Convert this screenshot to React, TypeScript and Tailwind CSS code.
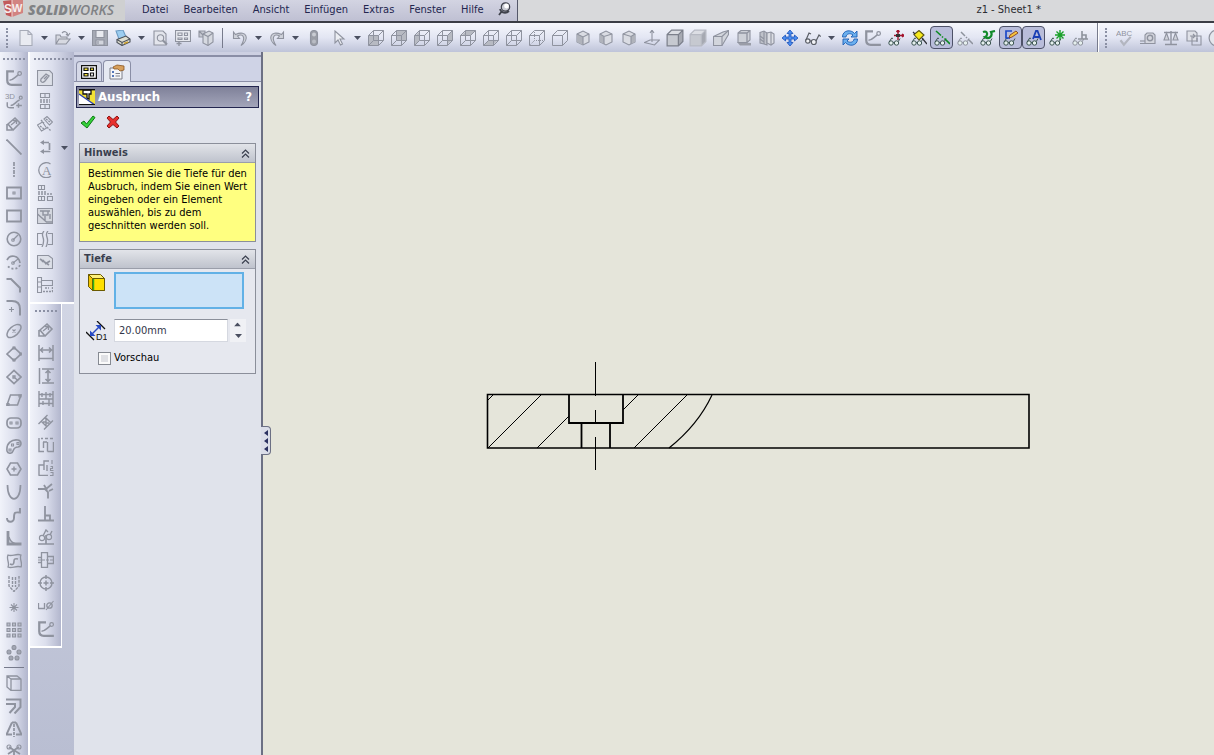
import type { ReactNode } from "react";

const MENU = ["Datei", "Bearbeiten", "Ansicht", "Einfügen", "Extras", "Fenster", "Hilfe"];

type Item = { name: string; icon: ReactNode; active?: boolean; wide?: boolean; drop?: boolean };

type Face = "front" | "back" | "left" | "right" | "top" | "bottom";

const FACES: Record<Face, string> = {
  front: "M1 6h9v9H1z",
  back: "M6 1h9v9H6z",
  left: "M1 6l5-5v9l-5 5z",
  right: "M10 6l5-5v9l-5 5z",
  top: "M1 6l5-5h9l-5 5z",
  bottom: "M1 15l5-5h9l-5 5z",
};

function Svg({ children, size = "m" }: { children: ReactNode; size?: "m" | "l" }) {
  return (
    <svg
      viewBox="0 0 16 16"
      className={size === "l" ? "size-[18px] shrink-0" : "size-4 shrink-0"}
      fill="none"
      stroke="currentColor"
      strokeWidth="1.1"
      aria-hidden="true"
    >
      {children}
    </svg>
  );
}

function Wire({ face }: { face?: Face }) {
  return (
    <Svg>
      {face && <path d={FACES[face]} fill="#b7bac2" stroke="none" />}
      <path d="M.5 5.5h10v10H.5zM5.500.5h10v10h-10zM.5 5.500l5-5M10.500 5.500l5-5M10.500 15.500l5-5M.5 15.500l5-5" strokeWidth="1" />
    </Svg>
  );
}

function Solid({ edges = true }: { edges?: boolean }) {
  return (
    <Svg size="l">
      <path d="M1 5l4-4h10l-4 4z" fill="#dcdee4" stroke="none" />
      <path d="M1 5h10v10H1z" fill="#c6c9d0" stroke="none" />
      <path d="M11 5l4-4v10l-4 4z" fill="#a6a9b2" stroke="none" />
      <path d="M1 15V5l4-4h10v10l-4 4zM1 5h10l4-4M11 5v10" stroke={edges ? "#7c808b" : "#b7bac3"} />
    </Svg>
  );
}

function Iso({ d, left }: { d: string; left: string }) {
  return (
    <Svg>
      <path d="M2 4l6-3 6 3v8l-6 3-6-3z" fill="#dadce3" />
      <path d={left} fill="#b0b3bb" stroke="none" />
      <path d={d} />
    </Svg>
  );
}

/* little pair of spectacles shared by all the show/hide commands */
function Specs({ children, dim }: { children?: ReactNode; dim?: boolean }) {
  return (
    <Svg>
      <g stroke={dim ? "#8d929c" : "#3b5450"} strokeWidth="1">
        <circle cx="3" cy="13" r="2.2" fill="#e6f0ee" />
        <circle cx="8.500" cy="13" r="2.200" fill="#e6f0ee" />
        <path d="M5.200 12.500h1M1.200 12l2.500-4 1.300.5M10.300 11.500L12 8.500" />
      </g>
      {children}
    </Svg>
  );
}

const sketchIcon = (
  <Svg size="l">
    <path d="M8 2H2v8c0 3 1.500 4 4 4h9" strokeWidth="2" />
    <path d="M4 10c3 0 4-2 8-5" strokeWidth="1.300" />
    <circle cx="13" cy="4" r="1.600" />
  </Svg>
);

const dimensionIcon = (
  <Svg>
    <path d="M2 8l7-6 5 5-7 7zM1 8v6h5" strokeWidth="1.600" />
    <path d="M5 9l5-4M7 4.500h3.500V8" strokeWidth="1.300" />
  </Svg>
);

const MAIN_A: Item[] = [
  { name: "Neu", drop: true, icon: <Svg><path d="M2 .5h8l4 4v11H2zM10 .5v4h4" fill="#e9ebf1" stroke="#a7abb7" /></Svg> },
  { name: "Öffnen", drop: true, icon: <Svg><path d="M1 14V5h4l1 2h6v2M1 14l3-5h11l-4 5z" fill="#d7d9e1" /><path d="M7 3c2-2 5-2 6 2M11 4l2 2 2-3" /></Svg> },
  { name: "Speichern", icon: <Svg><path d="M.5.5h15v15H.5z" fill="#a5a9b4" /><path d="M4 .5h8v7H4z" fill="#e8eaf0" /><path d="M4 10h8v5H4z" fill="#d2d5dd" /><path d="M6 11v3" /></Svg> },
  { name: "Drucken", drop: true, icon: (
    <Svg>
      <path d="M1 1l7-1 3 7-7 2z" fill="#9ccdf0" stroke="#6c9cc4" />
      <path d="M2 9.500L11 6l4 3v3l-8 3.500-5-3z" fill="#dedfd2" stroke="#4c5058" />
      <path d="M2 9.500l5 3L15 9M7 12.500v3" stroke="#4c5058" />
      <path d="M9 13.500l4-1.500" stroke="#c99d2d" strokeWidth="1.500" />
    </Svg>
  ) },
  { name: "Seitenansicht", icon: <Svg><path d="M2 1h9l3 3v11H2z" fill="#e3e5ec" /><circle cx="8.500" cy="8" r="3.200" /><path d="M11 10.500l4 4" strokeWidth="2.200" /></Svg> },
  { name: "Zeichnung", icon: <Svg><path d="M.5.5h15v11H.5z" fill="#e6e8ee" /><path d="M3 3h4v2.500H3zM9.500 3h3v2.500h-3zM3 8h4v1.500H3zM9.500 8h3v1.500h-3z" /><path d="M4 11v5M1.500 13.500h5" strokeWidth="1.400" /></Svg> },
  { name: "Baugruppe", icon: <Svg><path d="M1 1h6v6H1zM1 1l6 6" fill="#c6c9d2" /><path d="M5 4l6-3 4 2v9l-5 3.500L5 13z" fill="#d6d9e0" /><path d="M5 4l5 2.500L15 3M10 6.500v9" /></Svg> },
];

const MAIN_B: Item[] = [
  { name: "Rückgängig", drop: true, icon: <Svg><path d="M1.500 2v6.500h6L5.500 6c5-3 9 1 3.500 9.500 9-6 6-16-5.500-11z" fill="#cfd2da" /></Svg> },
  { name: "Wiederholen", drop: true, icon: <Svg><path d="M14.500 2v6.500h-6l2-2.500c-5-3-9 1-3.500 9.500-9-6-6-16 5.500-11z" fill="#cfd2da" /></Svg> },
  { name: "Modellneuaufbau", wide: true, icon: <Svg><rect x="4.500" y=".5" width="7" height="15" rx="3.500" fill="#9b9ea7" /><circle cx="8" cy="4.500" r="2" fill="#c9ccd3" stroke="none" /><circle cx="8" cy="11.500" r="2" fill="#b9bcc4" stroke="none" /></Svg> },
  { name: "Auswählen", drop: true, icon: <Svg><path d="M4 1v12l3-3 2.500 5 2-1L9 9h4z" fill="#eceef3" /></Svg> },
  { name: "Vorderseite", icon: <Wire face="front" /> },
  { name: "Rückseite", icon: <Wire face="back" /> },
  { name: "Links", icon: <Wire face="left" /> },
  { name: "Rechts", icon: <Wire face="right" /> },
  { name: "Oben", icon: <Wire face="top" /> },
  { name: "Unten", icon: <Wire face="bottom" /> },
  { name: "Drahtdarstellung", icon: <Wire /> },
  { name: "Verdeckte Kanten sichtbar", icon: <Svg><path d="M.5 15.500v-10l5-5h10v10l-5 5zM.5 5.500h10l5-5M10.500 5.500v10" strokeWidth="1" /><path d="M5.500 2v8.500H14M5 11l-4 4" strokeDasharray="1 1" strokeWidth="1" /></Svg> },
  { name: "Verdeckte Kanten ausgeblendet", icon: <Svg><path d="M.5 15.500v-10l5-5h10v10l-5 5zM.5 5.500h10l5-5M10.500 5.500v10" strokeWidth="1" /></Svg> },
  { name: "Isometrisch", icon: <Iso left="M2 4l6 3v8l-6-3z" d="M2 4l6 3 6-3M8 7v8" /> },
  { name: "Trimetrisch", icon: <Iso left="M2 4l4 2.500V14l-4-2z" d="M2 4l4 2.500L14 4M6 6.500V14" /> },
  { name: "Dimetrisch", icon: <Iso left="M10 6.500L14 4v8l-4 2z" d="M2 4l8 2.500L14 4M10 6.500V14" /> },
  { name: "Normal auf", icon: <Svg><path d="M8 12V0M6 3l2-3 2 3M.5 12.500L6 10h9.500l-5 5z" /></Svg> },
  { name: "Schattiert mit Kanten", icon: <Solid /> },
  { name: "Schattiert", icon: <Solid edges={false} /> },
  { name: "Perspektive", icon: <Svg><path d="M.5 6.500L10 2l5.500-1.500v4L9 15.500H.5z" fill="#d2d5dc" /><path d="M.5 6.500H9v9M9 6.500l6.500-6" /></Svg> },
  { name: "Schatten", icon: <Svg><path d="M1 12l3 3.500h11V13z" fill="#9a9da7" stroke="none" /><path d="M2 3l3-2.500h9V10l-3 2.500H2z" fill="#ced1d8" /><path d="M2 3h9v9.500M11 3l3-2.500" strokeWidth="1.300" /></Svg> },
  { name: "Schnittansicht", icon: <Svg><path d="M1 2.500L5 1l3 2v12l-3-1-4-1z" fill="#bfc2ca" /><path d="M8 3l4-1 3 2v9l-3 2-4-2z" fill="#dcdee4" /><path d="M5 1v13M12 2v12M1 6l4 3M1 9l4 3" /></Svg> },
  { name: "Verschieben", icon: <Svg><path d="M8 0l3 3.500H9V7h3.500V5L16 8l-3.500 3V9H9v3.500h2L8 16l-3-3.500h2V9H3.500v2L0 8l3.500-3v2H7V3.500H5z" fill="#4d8ff0" stroke="#1c50b8" strokeWidth=".8" /></Svg> },
  { name: "Ausblenden/Einblenden", drop: true, icon: <Svg><g stroke="#5a5e66" strokeWidth="1.200"><circle cx="2.800" cy="11" r="2.200" fill="#f2f3f6" /><circle cx="8.800" cy="12" r="2.500" fill="#f2f3f6" /><path d="M5 11h1.500M1 10l3-7 2 1M11 11l3-6 1.700 1.500" /></g></Svg> },
  { name: "Bildneuaufbau", icon: <Svg><path d="M.5 7C.5 0 9-1 12.500 3.500L15 1v6H9l2-2C8 2.500 4 4 4 7zM15.500 9c0 7-8.500 8-12 3.500L1 15V9h6l-2 2c3 2.500 7 1 7-2z" fill="#6cb0ee" stroke="#1d5fb4" strokeWidth=".9" /></Svg> },
  { name: "Skizze schließen", icon: sketchIcon },
  { name: "Ursprünge", icon: <Specs><path d="M10 0v10M6 5.500h10M8.500 2L10 0l1.500 2M14 4l2 1.500L14 7" stroke="#a3142d" strokeWidth="1.400" /><path d="M8 4h4v3H8z" fill="#333" stroke="none" /></Specs> },
  { name: "Ebenen", icon: <Specs><path d="M3 4.500L8 .5l5 4.500-5 5z" fill="#f6e91c" stroke="#5b5410" /><path d="M2 2l2 2M11 8l5 6" stroke="#33343a" strokeWidth="1.300" /></Specs> },
  { name: "Achsen", active: true, icon: <Specs><path d="M2 1l5 4.500M8 6.500l1 1M10.500 8.500L16 14" stroke="#0c8a20" strokeWidth="1.600" /></Specs> },
  { name: "Temporäre Achsen", icon: <Specs dim><path d="M4 2l4 4M9 7l1 1M11 9l5 5" stroke="#8d929c" strokeWidth="1.500" /></Specs> },
  { name: "Kurven", icon: <Specs><path d="M3 2c5-2 5 4 2 5 4 3 8-1 6-5l4-1" stroke="#128a2a" strokeWidth="2.200" /></Specs> },
  { name: "Skizzen", active: true, icon: <Specs><path d="M9 1H3v7h4" stroke="#1c48c8" strokeWidth="1.700" /><path d="M6 8l1-3 6-4 2 2-6 4z" fill="#f7c33b" stroke="#7a3413" strokeWidth=".8" /></Specs> },
  { name: "Beschriftungen", active: true, icon: <Specs><path d="M7 9l3-8h1.500l3.500 9M8.500 7H13" stroke="#1a3fb4" strokeWidth="1.800" /></Specs> },
  { name: "Punkte", icon: <Specs><path d="M11 0v10M6 5h10M7.500 1.500l7 7M14.500 1.500l-7 7" stroke="#1aa02a" strokeWidth="1.400" /></Specs> },
  { name: "Verknüpfungen", icon: <Specs dim><path d="M10 1v8M6 9h10M10 5h4v4" stroke="#8d929c" strokeWidth="1.600" /></Specs> },
];

const MAIN_C: Item[] = [
  { name: "Rechtschreibung", icon: (
    <Svg size="l">
      <text x="0" y="6" fontSize="7" fontFamily="Liberation Sans" fill="currentColor" stroke="none">ABC</text>
      <path d="M4 10l3 4 6-7" strokeWidth="2" stroke="#b3b6c0" />
    </Svg>
  ) },
  { name: "Messen", icon: <Svg><path d="M5 13.500V5l2-2h6l2 2v8.500H0" fill="#d4d6de" /><circle cx="10" cy="8" r="2.700" strokeWidth="1.400" /><path d="M0 11h5" /></Svg> },
  { name: "Masseneigenschaften", icon: <Svg><path d="M8 1v13M1 2.500h14M2 14.500h12" strokeWidth="1.400" /><path d="M3.500 3L1 10h5zM12.500 3L10 10h5z" fill="#d0d3db" /></Svg> },
  { name: "Prüfen", icon: <Svg><path d="M1 1h8l2 2v8H1z" fill="#dfe1e8" /><path d="M6 6h9v9H6zM4 6h5M7 4l2 2-2 2M11 12V8" /></Svg> },
  { name: "Uhr", icon: <Svg size="l"><circle cx="8" cy="8" r="7" fill="#e4e6ec" /><path d="M8 4v4h4" /></Svg> },
];

const SKETCH: Item[] = [
  { name: "Skizze", icon: sketchIcon },
  { name: "3D-Skizze", icon: (
    <Svg size="l">
      <text x="0" y="6" fontSize="7" fontFamily="Liberation Sans" fill="currentColor" stroke="none">3D</text>
      <path d="M2 9v3c0 2 1 2 3 2h3M5 12c3 0 4-3 8-5M12 10v4M10 12h5" strokeWidth="1.300" />
      <circle cx="14" cy="5" r="1.300" />
    </Svg>
  ) },
  { name: "Intelligente Bemaßung", icon: dimensionIcon },
  { name: "Linie", icon: <Svg><path d="M.5.5l15 15" strokeWidth="1.800" /></Svg> },
  { name: "Mittellinie", icon: <Svg><path d="M8 0v16" strokeWidth="1.700" strokeDasharray="4 1 2 1" /></Svg> },
  { name: "Rechteck Mittelpunkt", icon: <Svg><path d="M1 2.500h14v11H1z" strokeWidth="1.800" /><path d="M7 7h2v2H7z" /></Svg> },
  { name: "Rechteck", icon: <Svg><path d="M1 2.500h14v11H1z" strokeWidth="1.800" /></Svg> },
  { name: "Kreis", icon: <Svg><circle cx="8" cy="8" r="6.800" strokeWidth="1.600" /><path d="M7 9l5-5" strokeWidth="1.300" /><circle cx="7" cy="9" r="1.300" /></Svg> },
  { name: "Kreisbogen", icon: <Svg><path d="M1 6c3-6 12-5 13 3" strokeWidth="1.700" /><path d="M14 11c-2 5-10 5-13 0" strokeDasharray="2 2" strokeWidth="1.800" /><path d="M7 9l5-4" /><circle cx="7" cy="9" r="1.300" /></Svg> },
  { name: "Fase", icon: <Svg><path d="M.5 2H5l9 9v4.500" strokeWidth="2" /></Svg> },
  { name: "Verrundung", icon: <Svg><path d="M.5 1H6c6 0 8 3 8 8v6.500" strokeWidth="2" /><path d="M5.500 7v5M3 9.500h5" /></Svg> },
  { name: "Ellipse", icon: <Svg><ellipse cx="8" cy="8" rx="8.500" ry="4.500" transform="rotate(-42 8 8)" strokeWidth="1.500" /><path d="M6.500 6.500l3 3M9.500 6.500l-3 3" /></Svg> },
  { name: "Parallelogramm Ecke", icon: <Svg><path d="M1 8l7-6.500L15 8l-7 6.500z" strokeWidth="1.700" /><path d="M7 1h2v2H7zM14 7h2v2h-2zM7 13h2v2H7z" /></Svg> },
  { name: "Raute", icon: <Svg><path d="M1 8l7-6.500L15 8l-7 6.500z" strokeWidth="1.700" /><path d="M7 7h2v2H7zM9 9l3 2.500" strokeWidth="1.300" /></Svg> },
  { name: "Parallelogramm", icon: <Svg><path d="M4.500 3H15l-3.500 10H1z" strokeWidth="1.500" /><path d="M1 11.500h2v2H1zM13 3h2v2h-2z" /></Svg> },
  { name: "Langloch", icon: <Svg><rect x="1" y="3" width="14" height="10" rx="4" strokeWidth="1.700" /><path d="M4 7h2v2H4zM10 7h2v2h-2z" /></Svg> },
  { name: "Bogenlangloch", icon: <Svg><path d="M1 13C0 5 6 1 12 2c4 1 4 6 0 7-3 0-4 1-5 4-1 3-5 3-6 0z" strokeWidth="1.600" /><path d="M3 11h2v2H3zM5.500 6h2v2h-2zM11 4.500h2v2h-2z" /></Svg> },
  { name: "Polygon", icon: <Svg><path d="M4.500 2h7L15 8l-3.500 6h-7L1 8z" strokeWidth="1.600" /><path d="M8 5.500v5M5.500 8h5" strokeWidth="1.400" /></Svg> },
  { name: "Parabel", icon: <Svg><path d="M1.500 1c0 18.500 13 18.500 13 0" strokeWidth="1.700" /></Svg> },
  { name: "Spline", icon: <Svg><path d="M1 11c0 5 7 5 7 0 0-6 1-6 6-5.500V1" strokeWidth="1.900" /></Svg> },
  { name: "Ecke", icon: <Svg><path d="M2 1v13h13.500" strokeWidth="2.800" /><path d="M3 7c1 4 3 6 7 7" strokeWidth="1.400" /></Svg> },
  { name: "Spline auf Fläche", icon: <Svg><path d="M2 2c4 2 8-2 13 0-2 4 2 8 0 12-5-2-9 2-13 0 2-4-2-8 0-12z" strokeWidth="1.300" /><path d="M4 11c4 2 4-2 4-3s0-3 4-2" strokeWidth="1.600" /></Svg> },
  { name: "Bohrung", icon: <Svg><path d="M3 0v10l5 5.500 5-5.500V0M6.500 1v10M9.500 1v10" strokeWidth="1.400" strokeDasharray="3 1" /></Svg> },
  { name: "Punkt", icon: <Svg><path d="M8 4v9M3.500 8.500h9M5 5.500l6 6M11 5.500l-6 6" /></Svg> },
  { name: "Lineares Muster", icon: <Svg><path d="M1 1h3v3H1zM6.500 1h3v3h-3zM12 1h3v3h-3zM1 6.500h3v3H1zM6.500 6.500h3v3h-3zM12 6.500h3v3h-3zM1 12h3v3H1zM6.500 12h3v3h-3zM12 12h3v3h-3z" fill="#b9bdc9" /></Svg> },
  { name: "Kreismuster", icon: <Svg><g fill="#a3a7b4"><circle cx="8" cy="2.500" r="2" /><circle cx="3" cy="7" r="2" /><circle cx="13" cy="7" r="2" /><circle cx="5" cy="13" r="2" /><circle cx="11" cy="13" r="2" /></g></Svg> },
];

const SKETCH_TOOLS: Item[] = [
  { name: "Elemente übernehmen", icon: <Svg><path d="M1 1h10l4 3v11.500H5L1 12zM1 1l4 3v11.500M5 4h10" strokeWidth="1.300" /></Svg> },
  { name: "Offset", icon: <Svg><path d="M0 1.500h14.500V9l-6 6.500M0 6h9v3l-5.500 6" strokeWidth="2" /></Svg> },
  { name: "Spiegeln", icon: <Svg><path d="M6 1.500L.5 13.500H6M10 1.500l5.500 12H10M6 1.500h4" strokeWidth="1.900" /><path d="M8 3v13" strokeDasharray="3 1" strokeWidth="1.700" /></Svg> },
  { name: "Trimmen", icon: <Svg><path d="M3 3l11 7M13 3L2 10M8 6v9" strokeWidth="1.800" /><circle cx="3" cy="3" r="2" /><circle cx="13" cy="3" r="2" /></Svg> },
];

const VIEWS: Item[] = [
  { name: "Modellansicht", icon: <Svg><path d="M.5.5h12l3 3v12H.5z" fill="#dcdfe7" /><path d="M4 9l5-5 3 2-4 5c-3 3-5 0-4-2zM7 9l3-3" strokeWidth="1.300" /></Svg> },
  { name: "Projizierte Ansicht", icon: <Svg><path d="M3.500.5h9v4h-9zM3.500 11.500h9v4h-9zM8 .5v4M8 11.500v4" /><path d="M3 7h10M3 9h10" strokeDasharray="2 1" strokeWidth="1.300" /></Svg> },
  { name: "Hilfsansicht", icon: <Svg><path d="M.5 9l5-3 4 6-5 3zM7 3l3-2.500L15.500 6l-3 3z" /><path d="M3 10l4 3M9 3l4 3M10 11l4 4M4 4l3 3" strokeDasharray="2 1" strokeWidth="1.400" /></Svg> },
  { name: "Schnittlinie", icon: <Svg><path d="M5 3.500h7.500v9H5" strokeWidth="1.700" strokeDasharray="7 1" /><path d="M7 1L3 3.500 7 6zM7 10l-4 2.500L7 15z" fill="currentColor" stroke="none" /></Svg> },
  { name: "Detailansicht", icon: (
    <Svg>
      <path d="M14 14a7.500 7.500 0 1 1-.5-12" strokeWidth="1.300" />
      <text x="5" y="13" fontSize="13" fontFamily="Liberation Serif" fill="currentColor" stroke="none">A</text>
    </Svg>
  ) },
  { name: "Standard 3 Ansichten", icon: <Svg><path d="M1.500.5h6v4h-6zM1.500 11.500h6v4h-6zM10.500 11.500h5v4h-5zM4.500.5v4M4.500 11.500v4" /><path d="M1 7h9M1 9h14" strokeDasharray="2 1" strokeWidth="1.400" /></Svg> },
  { name: "Ausbruch", icon: <Svg><path d="M.5.5h15v15H.5z" fill="#d5d8e0" /><path d="M3 3h10M6 3v4h5V3M.5 6l9 8h6M13 6v5M8 8v4" strokeWidth="1.400" /></Svg> },
  { name: "Bruchkante", icon: <Svg><path d="M5 2.500H.5v11H5M11 2.500h4.500v11H11" /><path d="M7 0c-5 5 3 6-2 16M11 0C6 5 14 6 9 16" strokeWidth="1.300" /></Svg> },
  { name: "Zuschneiden", icon: <Svg><path d="M.5 1.500h11l4 3v10H.5z" fill="#dcdfe7" /><path d="M3 5l9 6M8 10l5-3M5 8l2-2" strokeWidth="1.600" /></Svg> },
  { name: "Alternative Position", icon: <Svg><path d="M.5.5h4v15h-4zM4.500 3.500h11v5h-11zM.5 5h4M.5 10h4" /><path d="M6 14.500h9.500V9M8 11h4" strokeDasharray="2 1" strokeWidth="1.400" /></Svg> },
];

const DIMENSIONS: Item[] = [
  { name: "Bemaßung", icon: dimensionIcon },
  { name: "Horizontal", icon: <Svg><path d="M1 0v16M15 0v16M1 13.500h14M2 5h12M5 2.500L2.500 5 5 7.500M11 2.500L13.500 5 11 7.500" strokeWidth="1.500" /></Svg> },
  { name: "Vertikal", icon: <Svg><path d="M1.500 0v16M4 1h12M4 15h12M10 2v12M7.500 5L10 2.500 12.500 5M7.500 11l2.500 2.500 2.500-2.500" strokeWidth="1.500" /></Svg> },
  { name: "Basislinie", icon: <Svg><path d="M1 0v16M15 0v16M1 3.500h14M1 8h14M8 1v7M1 12.500h14M11 8v7M4 2v4M12 2v4M5 10v4" strokeWidth="1.400" /></Svg> },
  { name: "Ausgerichtet", icon: <Svg><path d="M.5 10l9-9M6 15.500l9-9M3 7l6 6M7 3l6 6M5 8h3V5M8 12V9h3" strokeWidth="1.400" /></Svg> },
  { name: "Koordinaten horizontal", icon: <Svg><path d="M1 1v13.500h5M5.500 5v6M9.500 5v9.500M9.500 14.500h6V5M3 1.500h2M7 1.500h3M12 1.500h3M5 5h4" strokeWidth="1.400" /></Svg> },
  { name: "Koordinaten vertikal", icon: <Svg><path d="M.5 15.500H10M1 15.500V5h5M6 10V1h5M9 5v6" strokeWidth="1.400" /><path d="M14 0v4M12.500 6.500h2v2h-2v2h3M12.500 12.500h2.500v3h-3" /></Svg> },
  { name: "Fasenbemaßung", icon: <Svg><path d="M0 6h7l3 3v6.500M8 6l6-5M11 8l4-2M6 2l3 5" strokeWidth="1.800" /></Svg> },
  { name: "Beziehung", icon: <Svg><path d="M0 14.500h16M7 0v14M7 9.500h5v5" strokeWidth="1.800" /></Svg> },
  { name: "Beziehungen anzeigen", icon: <Svg><path d="M0 15h16M8 6v9" strokeWidth="1.700" /><circle cx="4" cy="9" r="2.600" /><circle cx="11" cy="8" r="2.600" /><path d="M5 7l3-6 2 2M12 6l2-4" strokeWidth="1.400" /></Svg> },
  { name: "Symmetrie", icon: <Svg><path d="M9.500 4.500h6v7h-6M3.500.5h6v15h-6zM0 5.500h3.500M0 10.500h3.500" strokeWidth="1.300" /><path d="M0 8h16" strokeDasharray="3 1" /></Svg> },
  { name: "Mittelkreuz", icon: <Svg><circle cx="8" cy="8" r="6" strokeWidth="1.400" /><path d="M8 0v4M8 12v4M0 8h4M12 8h4M5.500 8h5M8 5.500v5" strokeWidth="1.500" /></Svg> },
  { name: "Bohrungsbeschreibung", icon: <Svg><path d="M.5 5v5.500h6V5" strokeWidth="1.300" /><circle cx="11.500" cy="7.500" r="2.700" strokeWidth="1.300" /><path d="M8 12l7.500-9" /></Svg> },
  { name: "Skizze bearbeiten", icon: sketchIcon },
];

function Caret() {
  return (
    <svg viewBox="0 0 7 4" className="h-1 w-[7px] fill-[#4a4f60]" aria-hidden="true">
      <path d="M0 0h7L3.500 4z" />
    </svg>
  );
}

function Buttons({ items }: { items: Item[] }) {
  return (
    <>
      {items.map((it) => (
        <div key={it.name} className={it.wide ? "flex w-[25px] shrink-0" : "flex shrink-0"}>
          <button
            type="button"
            aria-label={it.name}
            className={
              it.active
                ? "flex size-[23px] items-center justify-center rounded-sm border border-[#4e5268] bg-[#b9bdda] text-[#8f939f]"
                : "flex size-[23px] items-center justify-center text-[#8f939f]"
            }
          >
            {it.icon}
          </button>
          {it.drop && (
            <button type="button" aria-label={`${it.name} Optionen`} className="flex w-3.5 items-center justify-center">
              <Caret />
            </button>
          )}
        </div>
      ))}
    </>
  );
}

function GripH() {
  return (
    <div className="flex h-3.5 shrink-0 items-center justify-center">
      <div className="w-[22px] border-t-2 border-dotted border-[#8b90a4]" />
    </div>
  );
}

function Group({ title, children }: { title: string; children: ReactNode }) {
  return (
    <section className="mx-[5px] border border-[#8b8f9a] bg-[#e6e8ef]">
      <h2 className="flex h-[19px] items-center justify-between border-b border-[#9a9eaa] bg-linear-to-b from-[#e2e4e9] to-[#bfc3cd] pr-[5px] pl-1 text-[11px] font-bold text-[#3a3f4e]">
        {title}
        <button type="button" aria-label={`${title} einklappen`} className="flex size-[9px]">
          <svg viewBox="0 0 9 9" className="size-[9px]" fill="none" stroke="#3a3f4e" strokeWidth="1.2">
            <path d="M1 4.500L4.500 1 8 4.500M1 8.500L4.500 5 8 8.500" />
          </svg>
        </button>
      </h2>
      {children}
    </section>
  );
}

function MenuBar() {
  return (
    <header className="flex h-[23px] shrink-0 border-b-2 border-[#3b3d45] bg-[#d8d9db]">
      <div className="flex w-[125px] shrink-0 items-start overflow-hidden bg-[#cfd0d1] pl-[3px]">
        <svg viewBox="0 0 21 18" className="mr-1 h-[18px] w-[21px] shrink-0" aria-hidden="true">
          <path d="M0 1l9-1v17l-6-2z" fill="#c25a5c" />
          <path d="M9 0l11-1v14L9 17z" fill="#d28482" />
          <path d="M9 0v17" stroke="#f0d8d6" />
          <text x="1" y="13" fontSize="12" fontWeight="bold" fontFamily="Liberation Sans" fill="#f6eeee">S</text>
          <text x="9" y="12" fontSize="11" fontWeight="bold" fontFamily="Liberation Sans" fill="#f6eeee">W</text>
        </svg>
        <span className="font-['Open_Sans',sans-serif] text-[14px] leading-5 text-[#808285] italic">
          <b className="font-extrabold">SOLID</b>
          <span className="font-semibold">WORKS</span>
        </span>
      </div>
      <nav className="flex shrink-0 items-start gap-[15px] border-r border-[#55586a] bg-linear-to-b from-[#d3d4e2] to-[#bfc0d3] pr-1.5 pl-[17px] text-[11px] leading-5 text-[#23264f]">
        {MENU.map((m) => (
          <button key={m} type="button">{m}</button>
        ))}
        <button type="button" aria-label="Menü anheften" className="mt-0.5">
          <svg viewBox="0 0 13 14" className="h-3.5 w-[13px]" fill="none" stroke="#3f424c" strokeWidth="1.2">
            <path d="M4 9l-3 4M2 7c1 4 6 5 9 2" strokeWidth="1.800" />
            <circle cx="7.500" cy="5" r="4.200" fill="#c9cad3" />
            <circle cx="8.500" cy="4" r="2.400" fill="#fff" stroke="none" />
          </svg>
        </button>
      </nav>
      <h1 className="flex-1 pl-[458px] text-[11px] leading-5 whitespace-nowrap text-[#2b2c30]">z1 - Sheet1 *</h1>
    </header>
  );
}

function MainToolbar() {
  return (
    <div className="flex h-[29px] shrink-0 items-center overflow-hidden bg-linear-to-b from-[#f6f7fc] via-[#e3e6f3] to-[#bfc4d9]">
      <div className="flex w-3.5 shrink-0 justify-center">
        <div className="h-5 border-l-2 border-dotted border-[#8b90a4]" />
      </div>
      <Buttons items={MAIN_A} />
      <div className="mx-[5px] h-5 w-px shrink-0 bg-[#777b8c]" />
      <Buttons items={MAIN_B} />
      <div className="ml-1.5 h-full w-0.5 shrink-0 border-r border-l border-r-white border-l-[#777b8c]" />
      <div className="mx-1.5 h-5 shrink-0 border-l-2 border-dotted border-[#8b90a4]" />
      <Buttons items={MAIN_C} />
    </div>
  );
}

function SideBars() {
  return (
    <div className="flex shrink-0 bg-linear-to-b from-[#dfe2ee] to-[#b9bed2]">
      <div className="flex w-[30px] shrink-0 flex-col items-center overflow-hidden border-r-2 border-white bg-linear-to-r from-[#f1f3fa] via-[#dcdfed] to-[#b2b6cd]">
        <GripH />
        <Buttons items={SKETCH} />
        <div className="my-[3px] h-px w-5 shrink-0 bg-[#777b8c]" />
        <Buttons items={SKETCH_TOOLS} />
      </div>
      <div className="flex w-11 shrink-0 flex-col items-start">
        <div className="flex w-11 flex-col border-b-2 border-white bg-linear-to-r from-[#f1f3fa] via-[#dcdfed] to-[#b2b6cd] pb-1.5">
          <div className="flex h-3.5 items-center pl-1">
            <div className="w-[38px] border-t-2 border-dotted border-[#8b90a4]" />
          </div>
          <div className="flex">
            <div className="pl-[3px]">
              <Buttons items={VIEWS} />
            </div>
            <button type="button" aria-label="Weitere Ansichten" className="mt-[78px] ml-0.5 flex h-2 w-3 items-center justify-center">
              <Caret />
            </button>
          </div>
        </div>
        <div className="flex w-8 flex-col items-center border-r border-b-2 border-white bg-linear-to-r from-[#f1f3fa] via-[#dcdfed] to-[#b2b6cd] pb-1.5">
          <GripH />
          <Buttons items={DIMENSIONS} />
        </div>
      </div>
    </div>
  );
}

function PropertyManager() {
  return (
    <aside className="relative flex w-[189px] shrink-0 flex-col border-r-2 border-[#6c7084] bg-[#e0e3eb]">
      <div className="h-[5px] border-b-2 border-[#8a8ea6] bg-[#cdd0e2]" />
      <div className="flex h-[25px] items-end gap-px border-b border-[#8a8ea6] bg-[#cfd3e6] pl-0.5">
        <button type="button" aria-label="FeatureManager" className="flex h-5 w-[26px] items-center justify-center rounded-t border border-b-0 border-[#8a8ea6] bg-[#d6d9e8]">
          <svg viewBox="0 0 16 14" className="h-3.5 w-4" fill="#f4e236" stroke="#111" strokeWidth="1.2">
            <path d="M.6.6h14.800v12.800H.6z" fill="#fff" />
            <path d="M3 3h4v2.500H3zM9.500 3h3v2.500h-3zM3 8.500h4V11H3z" />
            <path d="M9.500 8h3v3h-3z" fill="#fff" />
          </svg>
        </button>
        <button type="button" aria-label="PropertyManager" className="-mb-px flex h-[22px] w-7 items-center justify-center rounded-t border border-b-0 border-[#8a8ea6] bg-[#e6e9f2]">
          <svg viewBox="0 0 16 16" className="size-4" fill="none" stroke="#7d7f88">
            <path d="M1 4h12v11H1z" fill="#f4f5f8" />
            <path d="M3 7h2v2H3zM3 11h2v2H3z" fill="#5577b8" stroke="none" />
            <path d="M6.500 9.500H11M6.500 12H11" />
            <path d="M4 3l4-2 7 1v4l-4 1-2-2H5z" fill="#d7a05c" stroke="#8a5520" strokeWidth=".8" />
          </svg>
        </button>
      </div>
      <div className="mx-0.5 mt-1 mb-[5px] flex h-[22px] items-center border border-[#23264f] bg-linear-to-b from-[#7f8199] to-[#a3a5ba] pr-1.5 pl-0.5">
        <svg viewBox="0 0 16 16" className="size-4" fill="none" aria-hidden="true">
          <path d="M0 0h16v16H0z" fill="#f4e236" />
          <path d="M0 5l16 11H0z" fill="#fff" />
          <path d="M4 1h8v4h-2v5L8 9V5H4z" fill="#fff" stroke="#111" strokeWidth="1.3" />
          <path d="M0 .7h16" stroke="#111" strokeWidth="1.4" />
          <path d="M0 5l16 11" stroke="#2a3fb0" strokeWidth="1.4" />
          <path d="M0 15.500h16" stroke="#111" />
        </svg>
        <h2 className="ml-[3px] flex-1 text-[13px] leading-5 font-bold text-white">Ausbruch</h2>
        <button type="button" aria-label="Hilfe" className="text-[13px] leading-5 font-bold text-white">?</button>
      </div>
      <div className="mb-3 flex h-[18px] items-center gap-2.5 pl-1.5">
        <button type="button" aria-label="OK">
          <svg viewBox="0 0 16 14" className="h-3.5 w-4">
            <path d="M1 8l3-2 2.500 3L13 1l2 1.500L7 13z" fill="#35d23a" stroke="#0d7a14" />
          </svg>
        </button>
        <button type="button" aria-label="Abbrechen">
          <svg viewBox="0 0 14 14" className="size-3.5">
            <path d="M1 3l2-2 4 3.500L11 1l2 2-3.500 4 3.500 4-2 2-4-3.500L3 13l-2-2 3.500-4z" fill="#e8302c" stroke="#8e1414" />
          </svg>
        </button>
      </div>
      <Group title="Hinweis">
        <p className="bg-[#ffff80] pt-1 pr-1 pb-[9px] pl-2 text-[11px] leading-[13px] text-black">
          Bestimmen Sie die Tiefe für den
          <br />
          Ausbruch, indem Sie einen Wert
          <br />
          eingeben oder ein Element
          <br />
          auswählen, bis zu dem
          <br />
          geschnitten werden soll.
        </p>
      </Group>
      <div className="h-[7px]" />
      <Group title="Tiefe">
        <div className="px-1.5 pt-[3px] pb-[7px]">
          <div className="flex items-start">
            <label htmlFor="tiefe-ref" aria-label="Tiefenreferenz" className="mt-0.5 w-7 pl-0.5">
              <svg viewBox="0 0 18 18" className="size-[18px]" stroke="#6b5a00">
                <path d="M.5.5h12l4 4v12h-12l-4-4z" fill="#fdf07a" />
                <path d="M.5.5l4 4v12l-4-4z" fill="#f4c400" />
                <path d="M4.500 4.500h12v12h-12z" fill="#ffdf00" />
                <path d="M5.500 5v11" stroke="#2fb01c" strokeWidth="1.5" />
              </svg>
            </label>
            <input id="tiefe-ref" readOnly className="h-[37px] w-[130px] border-2 border-[#62b1e6] bg-[#cce3f7]" />
          </div>
          <div className="mt-2.5 flex items-center">
            <label htmlFor="tiefe" aria-label="Tiefe" className="w-7">
              <svg viewBox="0 0 21 20" className="h-5 w-[21px]" fill="none" stroke="#111" strokeWidth="1.3">
                <path d="M0 11l8 8M11 0l8 8" />
                <path d="M5 14l9-9" stroke="#2749c4" strokeWidth="1.5" />
                <path d="M4 15V9.500L9.500 15zM15 4v5.500L9.500 4z" fill="#2749c4" stroke="none" />
                <text x="10" y="19" fontSize="9" fontFamily="Liberation Sans" fill="#111" stroke="none">D1</text>
              </svg>
            </label>
            <input id="tiefe" defaultValue="20.00mm" className="h-[23px] w-[114px] border border-[#d5d8e0] border-t-[#8b8f9a] bg-white px-1 text-[11px] text-[#33364a]" />
            <div className="ml-0.5 flex h-[23px] w-4 flex-col bg-[#f0f1f5]">
              <button type="button" aria-label="Erhöhen" className="flex flex-1 rotate-180 items-center justify-center"><Caret /></button>
              <button type="button" aria-label="Verringern" className="flex flex-1 items-center justify-center"><Caret /></button>
            </div>
          </div>
          <label className="mt-2 flex h-4 items-center gap-[3px] pl-3 text-[11px] text-black">
            <input type="checkbox" className="size-[13px] appearance-none border border-[#868a92] bg-[#dfe0e4] shadow-[inset_0_0_0_2px_#fafafa]" />
            Vorschau
          </label>
        </div>
      </Group>
      {/* collapse tab sits over the splitter */}
      <button
        type="button"
        aria-label="Leiste einklappen"
        className="absolute top-[374px] -right-2.5 z-10 flex h-[29px] w-2.5 items-center justify-center rounded-r border border-l-0 border-[#6c7084] bg-[#dadde8]"
      >
        <svg viewBox="0 0 4 22" className="h-[22px] w-1 fill-[#2b3160]">
          <path d="M4 0v6L0 3zM4 8v6l-4-3zM4 16v6l-4-3z" />
        </svg>
      </button>
    </aside>
  );
}

function Sheet() {
  return (
    <main className="relative flex-1 overflow-hidden bg-[#e5e5da]">
      <svg
        viewBox="0 0 545 110"
        className="absolute top-[309px] left-[223px] h-[110px] w-[545px]"
        fill="none"
        stroke="#000"
        role="img"
        aria-label="Platte mit Ausbruch"
      >
        <path d="M1.500 33.500H543V87H1.500z" strokeWidth="1.6" />
        <path d="M83 33v29h54V33M95.500 62v25M124 62v25" strokeWidth="1.8" />
        <path d="M1 40l6-6M2 87l53-53M51 87l32-32M137 49l15-15M148 87l53-53" />
        <path d="M183 87Q212 64 226 34" strokeWidth="1.2" />
        <path d="M109.500 1v34M109.500 49v12M109.500 76v33" />
      </svg>
    </main>
  );
}

export default function App() {
  return (
    <div className="flex h-screen flex-col overflow-hidden font-['DejaVu_Sans_Condensed','DejaVu_Sans',sans-serif]">
      <MenuBar />
      <MainToolbar />
      <div className="flex min-h-0 flex-1">
        <SideBars />
        <PropertyManager />
        <Sheet />
      </div>
    </div>
  );
}
